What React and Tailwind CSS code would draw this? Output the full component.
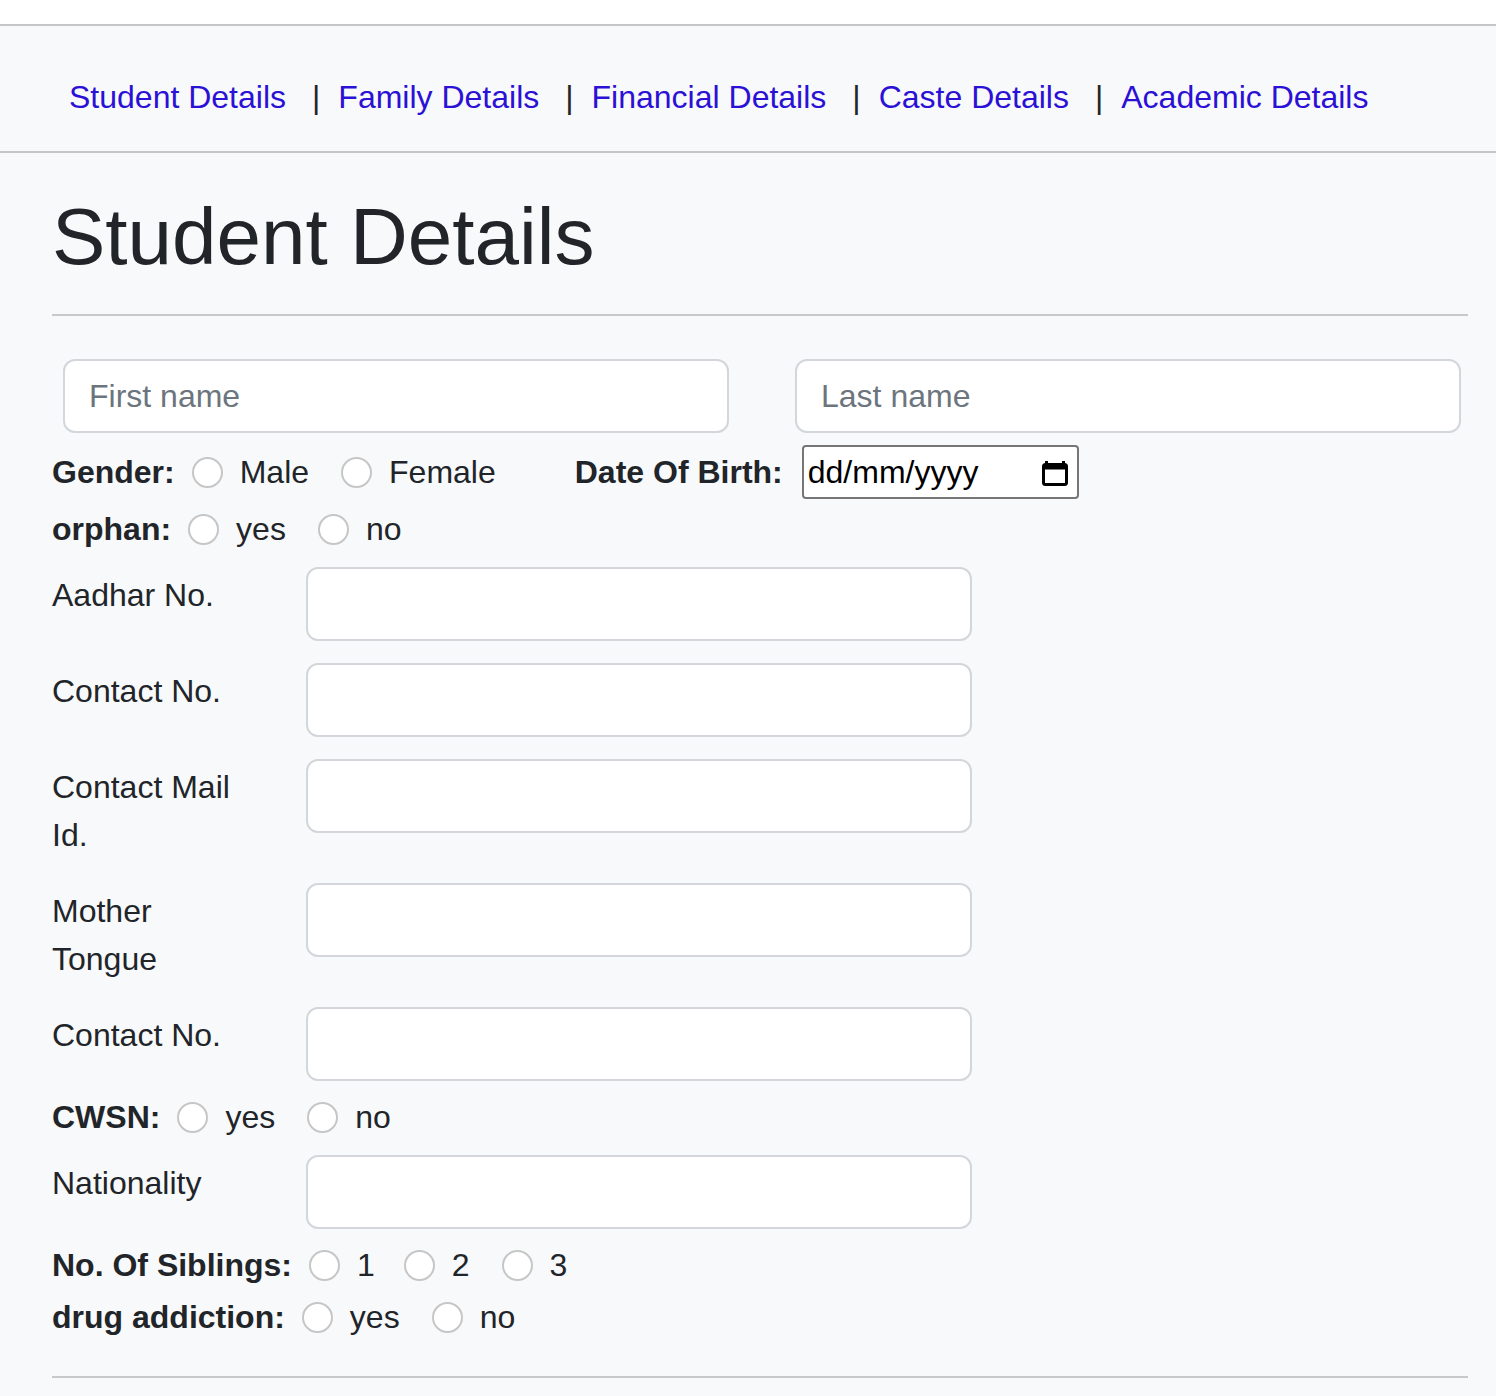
import React from "react";

const font = { fontFamily: '"Liberation Sans", Arial, sans-serif' };

function Radio({ className = "" }) {
  return (
    <input
      type="radio"
      className={
        "appearance-none shrink-0 w-[31px] h-[31px] rounded-full border-2 border-[#c6c6c6] bg-white m-0 " +
        className
      }
    />
  );
}

function NavLink({ children }) {
  return (
    <a href="#" className="text-[#2b10d6] no-underline">
      {children}
    </a>
  );
}

function Sep() {
  return <span className="ml-[26px] mr-[18px] text-[#212529]">|</span>;
}

function FieldRow({ label, className = "" }) {
  return (
    <div className={"flex items-start " + className}>
      <label className="w-[206px] mr-[48px] pt-[4px] leading-[48px]">{label}</label>
      <input
        type="text"
        className="w-[666px] h-[74px] rounded-[12px] border-2 border-[#d3d6da] bg-white px-[22px] text-[32px] outline-none"
      />
    </div>
  );
}

export default function App() {
  return (
    <div
      className="min-h-screen bg-[#f8f9fa] text-[#212529] text-[32px] leading-[48px]"
      style={font}
    >
      <div className="bg-white pt-[24px]">
        <nav className="flex items-start border-t-2 border-b-2 border-[#c6c6c6] bg-[#f8f9fa] pl-[69px] pt-[47px] pb-[30px] leading-[48px]">
          <NavLink>Student Details</NavLink>
          <Sep />
          <NavLink>Family Details</NavLink>
          <Sep />
          <NavLink>Financial Details</NavLink>
          <Sep />
          <NavLink>Caste Details</NavLink>
          <Sep />
          <NavLink>Academic Details</NavLink>
        </nav>
      </div>

      <main className="ml-[52px] w-[1416px] pb-[18px]">
        <h1 className="mt-[36px] text-[80px] leading-[96px] font-medium">
          Student Details
        </h1>
        <hr className="mt-[29px] border-0 h-[2px] bg-[#c8c9ca]" />

        <div className="flex mt-[43px] pl-[11px] gap-[66px]">
          <input
            type="text"
            placeholder="First name"
            className="w-[666px] h-[74px] rounded-[12px] border-2 border-[#d3d6da] bg-white px-[24px] text-[32px] placeholder:text-[#6c757d] outline-none"
          />
          <input
            type="text"
            placeholder="Last name"
            className="w-[666px] h-[74px] rounded-[12px] border-2 border-[#d3d6da] bg-white px-[24px] text-[32px] placeholder:text-[#6c757d] outline-none"
          />
        </div>

        <div className="flex items-center h-[58px] mt-[10px]">
          <span className="font-bold">Gender:</span>
          <Radio className="ml-[17px]" />
          <span className="ml-[17px]">Male</span>
          <Radio className="ml-[32px]" />
          <span className="ml-[17px]">Female</span>
          <span className="font-bold ml-[79px]">Date Of Birth:</span>
          <div className="ml-[19px] flex items-center justify-between w-[277px] h-[54px] rounded-[4px] border-2 border-[#767676] bg-white pl-[4px] pr-[9px] text-black">
            <span>dd/mm/yyyy</span>
            <svg width="26" height="28" viewBox="0 0 26 28">
              <rect x="3" y="3" width="3" height="5" fill="#000" />
              <rect x="20" y="3" width="3" height="5" fill="#000" />
              <rect x="1.5" y="6.5" width="23" height="20" rx="2" fill="none" stroke="#000" strokeWidth="3" />
              <rect x="1.5" y="6.5" width="23" height="5" fill="#000" />
            </svg>
          </div>
        </div>

        <div className="flex items-center h-[48px] mt-[4px]">
          <span className="font-bold">orphan:</span>
          <Radio className="ml-[17px]" />
          <span className="ml-[17px]">yes</span>
          <Radio className="ml-[32px]" />
          <span className="ml-[17px]">no</span>
        </div>

        <FieldRow label="Aadhar No." className="mt-[14px]" />
        <FieldRow label="Contact No." className="mt-[22px]" />
        <FieldRow label="Contact Mail Id." className="mt-[22px]" />
        <FieldRow label="Mother Tongue" className="mt-[24px]" />
        <FieldRow label="Contact No." className="mt-[24px]" />

        <div className="flex items-center h-[48px] mt-[12px]">
          <span className="font-bold">CWSN:</span>
          <Radio className="ml-[17px]" />
          <span className="ml-[17px]">yes</span>
          <Radio className="ml-[32px]" />
          <span className="ml-[17px]">no</span>
        </div>

        <FieldRow label="Nationality" className="mt-[14px]" />

        <div className="flex items-center h-[48px] mt-[12px]">
          <span className="font-bold">No. Of Siblings:</span>
          <Radio className="ml-[17px]" />
          <span className="ml-[17px]">1</span>
          <Radio className="ml-[29px]" />
          <span className="ml-[17px]">2</span>
          <Radio className="ml-[32px]" />
          <span className="ml-[17px]">3</span>
        </div>

        <div className="flex items-center h-[48px] mt-[4px]">
          <span className="font-bold">drug addiction:</span>
          <Radio className="ml-[17px]" />
          <span className="ml-[17px]">yes</span>
          <Radio className="ml-[32px]" />
          <span className="ml-[17px]">no</span>
        </div>

        <hr className="mt-[35px] border-0 h-[2px] bg-[#c8c9ca]" />
      </main>
    </div>
  );
}
